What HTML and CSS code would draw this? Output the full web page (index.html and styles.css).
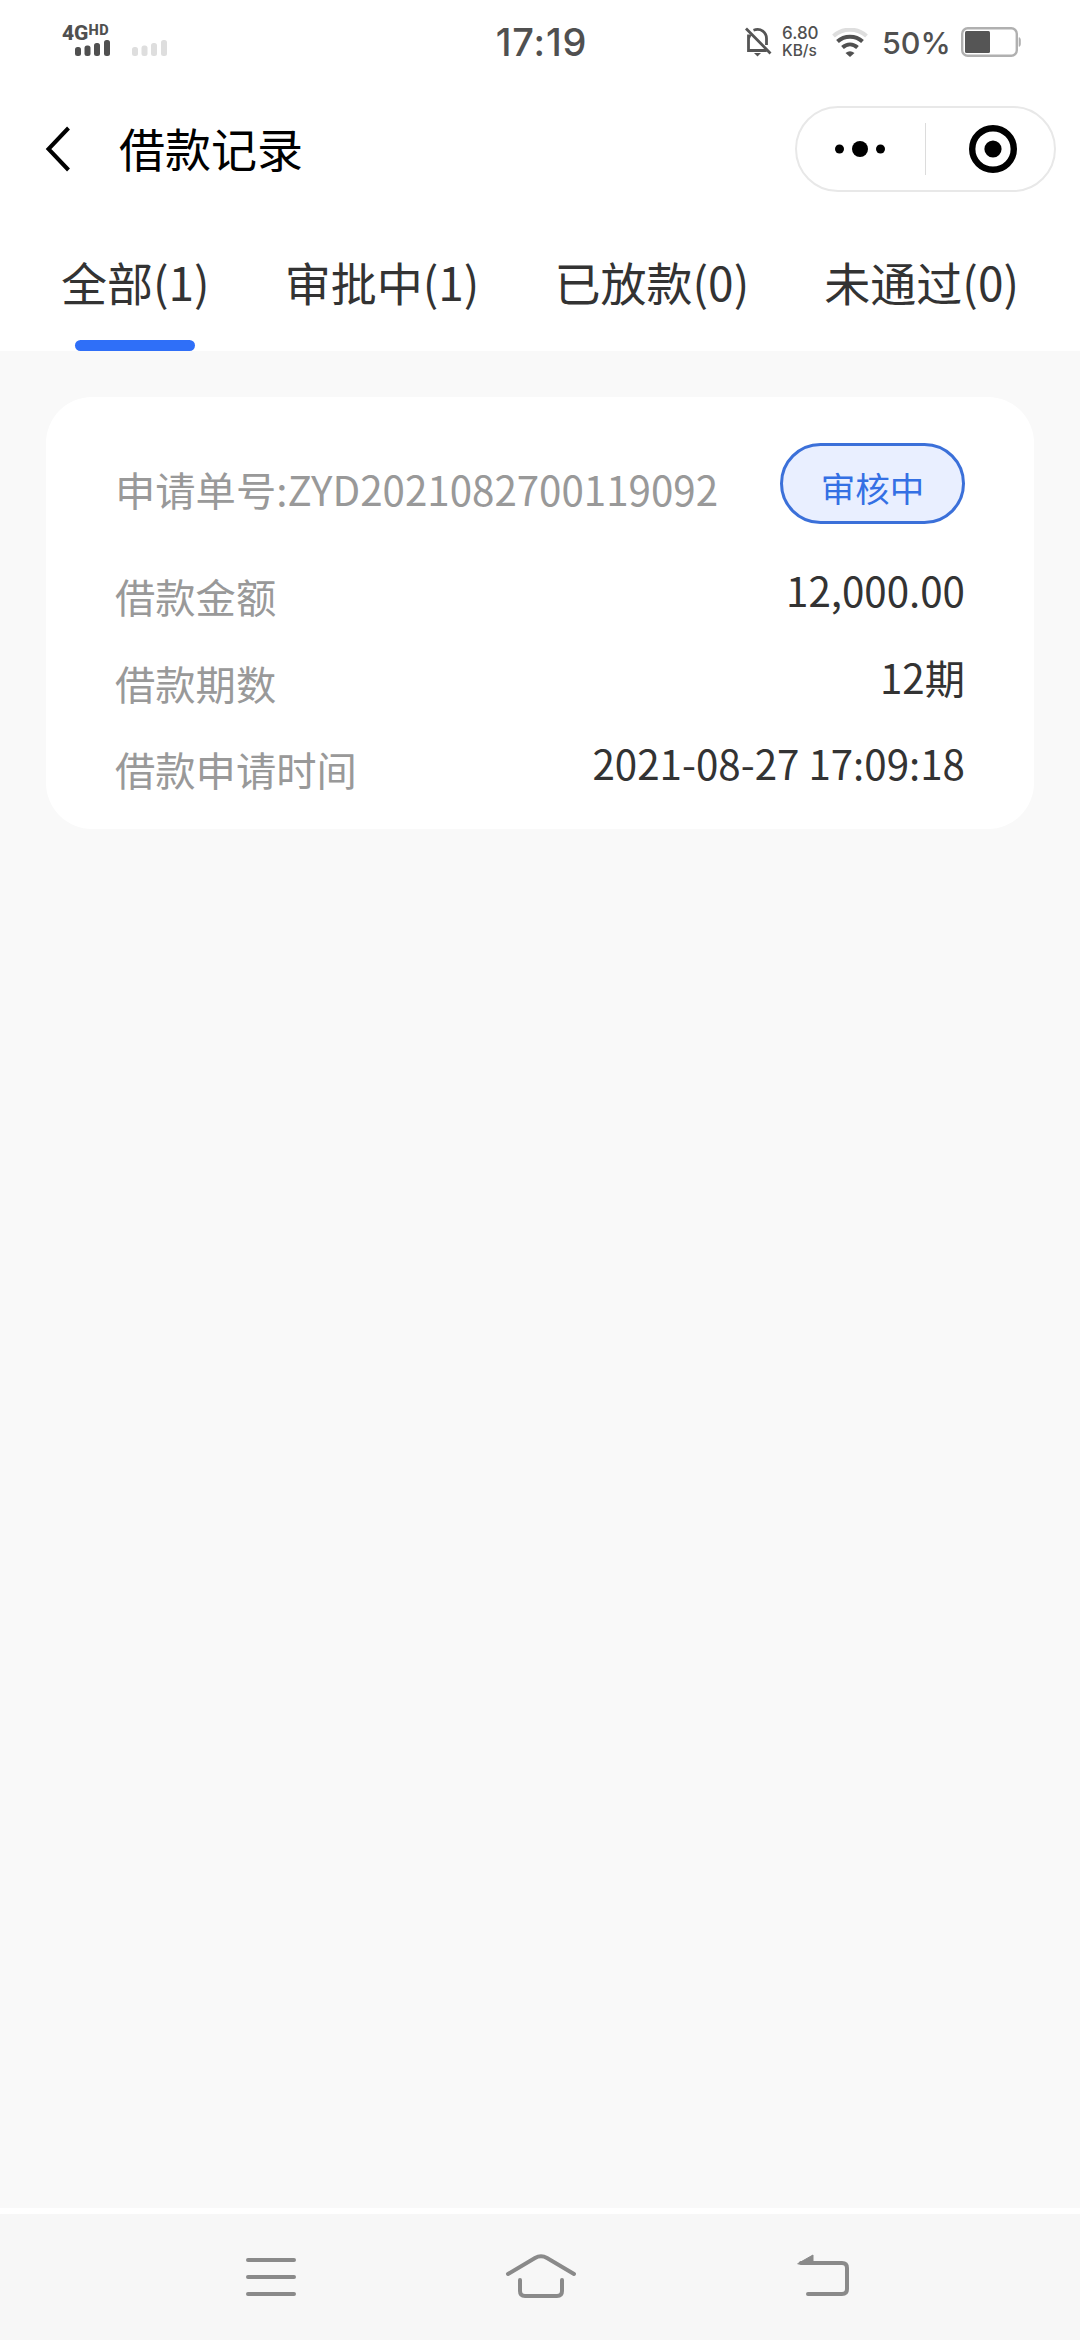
FILE: index.html
```
<!DOCTYPE html>
<html lang="zh-CN">
<head>
    <meta charset="UTF-8">
    <title>借款记录</title>
    <link rel="stylesheet" href="styles.css">
</head>
<body>
    <div class="status-bar">
        <div class="signal">
            <div class="network">4G<span class="hd">HD</span></div>
            <svg class="bars" width="92" height="16" viewBox="0 0 92 16">
                <g fill="#505050">
                    <rect x="0" y="7" width="6" height="9" rx="2.5"/>
                    <rect x="9.5" y="5.5" width="6" height="10.5" rx="2.5"/>
                    <rect x="19" y="3" width="6" height="13" rx="2.5"/>
                    <rect x="29" y="0" width="6" height="16" rx="2.5"/>
                </g>
                <g fill="#dedede">
                    <rect x="57" y="7" width="6" height="9" rx="2.5"/>
                    <rect x="66.5" y="5.5" width="6" height="10.5" rx="2.5"/>
                    <rect x="76" y="3" width="6" height="13" rx="2.5"/>
                    <rect x="86" y="0" width="6" height="16" rx="2.5"/>
                </g>
            </svg>
        </div>
        <div class="clock">17:19</div>
        <div class="status-right">
            <svg class="bell" width="27" height="30" viewBox="0 0 27 30" fill="none" stroke="#555" stroke-width="2.8">
                <path d="M1 1.5L25.5 26.5M3.5 7.5V23.5H21.5M3.5 11.5L5 8M8.5 3.2C16 0.5 21.5 5.5 21.5 11.5V18"/>
                <path d="M9 26H16L12.5 29.5Z" fill="#555" stroke="none"/>
            </svg>
            <div class="speed">
                <span class="speed-num">6.80</span>
                <span class="speed-unit">KB/s</span>
            </div>
            <svg class="wifi" width="36" height="29" viewBox="0 0 36 29" fill="none" stroke="#505050" stroke-width="4">
                <path d="M1.5 8C11 -0.5 25 -0.5 34.5 8" stroke="#dedede"/>
                <path d="M5.5 13.5C12.5 7 23.5 7 30.5 13.5"/>
                <path d="M10.5 19.5C15 15.5 21 15.5 25.5 19.5"/>
                <path d="M13.5 25Q18 21.5 22.5 25L18 29Z" fill="#505050" stroke="none"/>
            </svg>
            <div class="percent">50%</div>
            <svg class="battery" width="60" height="30" viewBox="0 0 60 30">
                <rect x="1.2" y="1.2" width="54.6" height="27.6" rx="5.5" fill="#fff" stroke="#b0b0b0" stroke-width="2.4"/>
                <rect x="4" y="4" width="25" height="22" rx="1.5" fill="#555"/>
                <path d="M58 10.5Q59.5 11 59.5 13V17Q59.5 19 58 19.5Z" fill="#b0b0b0" stroke="#b0b0b0" stroke-width="0.6"/>
            </svg>
        </div>
    </div>

    <div class="nav-bar">
        <svg class="back" width="26" height="48" viewBox="0 0 26 48" fill="none" stroke="#000" stroke-width="4">
            <path d="M23.5 3L3.5 24L23.5 45"/>
        </svg>
        <div class="title">借款记录</div>
        <div class="capsule">
            <svg class="more" width="50" height="16" viewBox="0 0 50 16">
                <circle cx="4.5" cy="8" r="4.5"/>
                <circle cx="25" cy="8" r="8"/>
                <circle cx="45.5" cy="8" r="4.5"/>
            </svg>
            <span class="line"></span>
            <svg class="close" width="48" height="48" viewBox="0 0 48 48">
                <circle cx="24" cy="24" r="20.8" fill="none" stroke="#000" stroke-width="6.4"/>
                <circle cx="24" cy="24" r="8.6"/>
            </svg>
        </div>
    </div>

    <div class="tabs">
        <div class="tab active">全部(1)</div>
        <div class="tab">审批中(1)</div>
        <div class="tab">已放款(0)</div>
        <div class="tab">未通过(0)</div>
    </div>

    <div class="content">
        <div class="card">
            <div class="card-head">
                <div class="order">申请单号:ZYD2021082700119092</div>
                <div class="badge">审核中</div>
            </div>
            <div class="row">
                <div class="label">借款金额</div>
                <div class="value">12,000.00</div>
            </div>
            <div class="row">
                <div class="label">借款期数</div>
                <div class="value">12期</div>
            </div>
            <div class="row">
                <div class="label">借款申请时间</div>
                <div class="value">2021-08-27 17:09:18</div>
            </div>
        </div>
    </div>

    <div class="system-nav">
        <svg width="70" height="50" viewBox="0 0 70 50">
            <path d="M13 8H59M13 25H59M13 42H59"/>
        </svg>
        <svg width="74" height="50" viewBox="0 0 74 50">
            <path d="M5 22L32 6Q38 2.5 44 6L71 22M17 28V39Q17 44 22 44H54Q59 44 59 39V28"/>
        </svg>
        <svg class="return" width="70" height="50" viewBox="0 0 70 50">
            <path d="M12 11H53Q58 11 58 16V37Q58 42 53 42H19"/>
            <path class="arrow" d="M9 11.5L24 3V12H10Z"/>
        </svg>
    </div>
</body>
</html>
```
FILE: styles.css
```
body {
    margin: 0;
    width: 1080px;
    height: 2340px;
    display: flex;
    flex-direction: column;
    background-color: #fff;
    font-family: "Noto Sans CJK SC", sans-serif;
    color: #333;
}
svg {
    display: block;
    flex-shrink: 0;
}

/* status bar */
.status-bar {
    display: grid;
    grid-template-columns: 1fr auto 1fr;
    height: 84px;
    padding: 0 59px 0 62px;
    box-sizing: border-box;
    font-family: Roboto, sans-serif;
    color: #505050;
}
.signal {
    padding-top: 24px;
}
.network {
    display: flex;
    height: 16px;
    font-size: 21px;
    line-height: 18px;
    font-weight: 800;
}
.hd {
    font-size: 14.5px;
    line-height: 13px;
    letter-spacing: 0.5px;
}
.bars {
    margin-left: 13px;
}
.clock {
    font-family: Inter, sans-serif;
    font-size: 38px;
    line-height: 84px;
    font-weight: 500;
    letter-spacing: 0.8px;
}
.status-right {
    display: flex;
    justify-content: flex-end;
    align-items: center;
    height: 84px;
}
.speed {
    display: flex;
    flex-direction: column;
    width: 38px;
    margin: 0 12px 0 10px;
    font-family: Inter, sans-serif;
    font-size: 17px;
    line-height: 17px;
    font-weight: 500;
}
.speed-unit {
    font-size: 15.5px;
}
.percent {
    width: 65px;
    margin: 0 14px 0 14px;
    font-family: Inter, sans-serif;
    font-size: 30.5px;
    font-weight: 500;
}

/* title bar */
.nav-bar {
    display: flex;
    align-items: center;
    height: 130px;
    padding: 0 24px 0 45px;
}
.title {
    margin: -4px 0 0 48px;
    font-size: 46px;
    line-height: 66px;
    color: #000;
}
.capsule {
    display: flex;
    align-items: center;
    width: 261px;
    height: 86px;
    margin-left: auto;
    border: 2px solid #e8e8e8;
    border-radius: 43px;
    box-sizing: border-box;
}
.more {
    margin-left: 38px;
}
.line {
    width: 1px;
    height: 52px;
    margin: 0 43px 0 40px;
    background-color: #dcdcdc;
}

/* tabs */
.tabs {
    display: flex;
    justify-content: space-between;
    height: 137px;
    padding: 0 61px;
}
.tab {
    position: relative;
    font-size: 46px;
    line-height: 135px;
}
.tab.active::after {
    content: "";
    position: absolute;
    left: 50%;
    bottom: 0;
    width: 120px;
    height: 11px;
    margin-left: -60px;
    border-radius: 6px;
    background-color: #2f6ff8;
}

/* records */
.content {
    flex: 1;
    padding: 46px 46px 0;
    background-color: #f9f9f9;
}
.card {
    height: 432px;
    padding: 46px 69px 0;
    box-sizing: border-box;
    background-color: #fff;
    border-radius: 46px;
}
.card-head {
    display: flex;
    justify-content: space-between;
    height: 104px;
}
.order {
    padding-top: 5px;
    font-size: 40.3px;
    line-height: 82px;
    color: #999;
}
.badge {
    width: 185px;
    height: 81px;
    padding-top: 4px;
    box-sizing: border-box;
    border: 3px solid #3b70d9;
    border-radius: 41px;
    background-color: #e9efff;
    color: #3470e4;
    font-size: 34.5px;
    line-height: 75px;
    text-align: center;
}
.row {
    display: flex;
    justify-content: space-between;
    height: 86.5px;
    font-size: 40.3px;
    line-height: 86px;
}
.label {
    padding-top: 6px;
    color: #999;
}

/* system navigation */
.system-nav {
    display: flex;
    align-items: center;
    gap: 198px;
    height: 126px;
    padding-left: 235px;
    border-top: 6px solid #fff;
    background-color: #f7f7f7;
}
.system-nav svg {
    fill: none;
    stroke: #8a8a8a;
    stroke-width: 4;
    stroke-linecap: round;
}
.system-nav .return {
    margin-left: 14px;
}
.system-nav .arrow {
    fill: #8a8a8a;
    stroke-width: 1;
}
```
